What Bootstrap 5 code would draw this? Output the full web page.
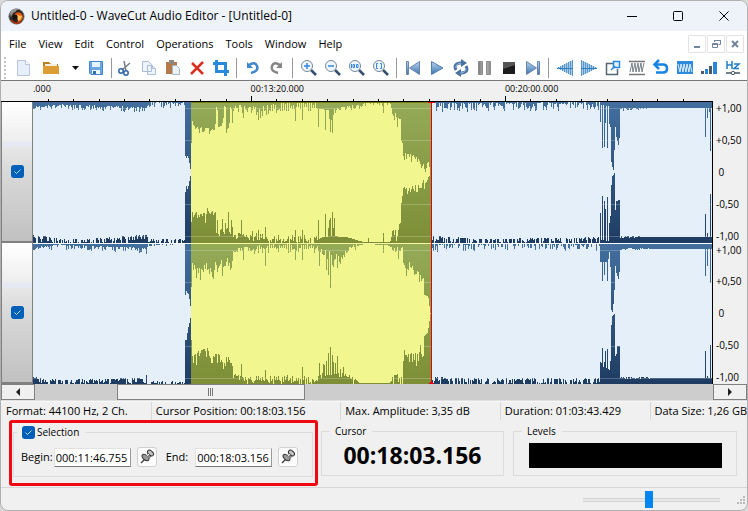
<!DOCTYPE html>
<html lang="en">
<head>
<meta charset="utf-8">
<meta name="viewport" content="width=device-width, initial-scale=1">
<title>Untitled-0 - WaveCut Audio Editor</title>
<link href="https://cdn.jsdelivr.net/npm/bootstrap@5.3.0/dist/css/bootstrap.min.css" rel="stylesheet">
<style>
body{font:11px/16px "Open Sans","Noto Sans",sans-serif;color:#000;background:#d9d9d9}
.app{min-height:100vh;background:#f0f0f0;border:1px solid #b0b0b0;border-radius:8px;overflow:hidden}
.app button{border:0;background:none;padding:0;color:inherit}
.app svg{display:block}
.titlebar{height:30px;background:#eef3fa;padding-left:7px}
.caption{font-size:12px;margin-left:6px}
.winbtn{width:46px;height:30px}
.menubar{height:26px;background:#fff;padding:0 3px 0 8px}
.menubar a{color:#000;text-decoration:none;margin-right:12px;font-size:11px}
.mdi-set{gap:1px}
.app .mdi{width:18px;height:18px;border:1px solid #e3e3e3;border-radius:1px}
.tools{height:24px;background:#fff;border-bottom:1px solid #777;padding:0 0 1px 3px}
.grip{width:7px;height:22px;background:repeating-linear-gradient(#c4c4c4 0 2px,#fff 2px 4px) no-repeat 0 0/2px 100%}
.tool{width:24px;height:22px;flex:none}
.tool svg,.drop svg{margin:auto}
.drop{width:21px;height:22px}
.split{width:8px;height:20px;flex:none;background:linear-gradient(#999,#999) no-repeat 3px 0/1px 100%}
.split-slim{width:5px}
.ruler{height:20px;padding:0 34px 0 32px;font-size:9px;line-height:16px}
.ruler .tick-row{height:5px;margin-top:-1px}
.label-a{width:32%}
.label-b{width:37.4%}
.channel-strip{width:32px;border-right:1px solid #808080;border-left:1px solid #808080}
.channel-box{background:linear-gradient(#fff 0%,#eee 28%,#e7e9f2 29%,#e7e9f2 32%,#e5e6e5 33%,#d9d9d9 50%,#c1c1c1 100%);border-bottom:2px solid #808080}
.tickbox{appearance:none;width:13px;height:13px;margin:0;border-radius:3px;background:#005fb8 url("data:image/svg+xml,%3Csvg xmlns='http://www.w3.org/2000/svg' viewBox='0 0 13 13'%3E%3Cpath d='M3.5 6.5l2 2 4-4' fill='none' stroke='%23bfe0ff'/%3E%3C/svg%3E")}
.wave{flex:1 1 0;min-width:0}
.stage{border-top:1px solid #000}
.stage-body{border-right:1px solid #000;flex:1 1 0;min-width:0}
.scale{width:34px;padding:0 0 0 3px;font-size:10px;line-height:12px}
.scale-half{padding:1px 0}
.hscroll{height:17px;background:#cdcdcd;border-bottom:1px solid #e0e0e0}
.app .hs-btn{width:34px;border:1px solid #808080;background:#f0f0f0}
.hs-lead{width:12.1%}
.hs-thumb{width:27.7%;border:1px solid #808080;background:#f0f0f0}
.info{height:19px;font-size:11px;line-height:18px;border-top:1px solid #f7f7f7;white-space:nowrap}
.info span{padding-left:4px;border-left:1px solid #d7d7d7;overflow:hidden}
.info .i1{width:20.1%;border-left:0;padding-left:5px}
.info .i2{width:25.4%}.info .i3{width:21.4%}.info .i4{width:20.1%}
.panels{padding:0 10px 0 8px;height:67px}
.callout{border:3px solid #f00912;border-radius:3px;width:309px;padding:1px 2px 0 1px;margin-bottom:1px}
.app fieldset{border:1px solid #dcdcdc}
.app legend{float:none;width:auto;font-size:10px;line-height:16px;margin:0 0 0 8px;padding:0 6px 0 5px}
.callout fieldset{height:53px}
.callout legend{margin-left:3px}
.callout legend label{margin-left:2px}
.fields{padding:7px 0 0 7px}
.cursor-box{width:183px;margin:3px 0 11px 3px}
.level-box{margin:3px 0 11px 9px;flex:1}
.clock{font:700 23px/25px "Open Sans","Noto Sans",sans-serif;margin-top:4px}
.meter{height:25px;background:#000;margin:4px 14px 0 15px}
.timefield{width:77px;height:19px;margin-left:1px;border:1px solid #e2e2e2;border-bottom-color:#777;border-right-color:#999;background:#fff;padding:0 1px;font:11px/16px "Open Sans","Noto Sans",sans-serif;color:#000;border-radius:0}
.end-label{margin:0 6px 0 9px}
.app .pin{width:20px;height:20px;margin-left:6px;border:1px solid #d0d0d0;border-radius:3px;background:#fdfdfd}
.foot{border-top:1px solid #d7d7d7;padding-right:1px;min-height:23px}
.zoomer{appearance:none;width:137px;height:18px;background:transparent;margin:0 16px 0 0}
.zoomer::-webkit-slider-runnable-track{height:17px;background:linear-gradient(#d4d4d4 1px,#e7e7e7 1px 3px,#d4d4d4 3px) no-repeat 0 7px/100% 4px}
.zoomer::-webkit-slider-thumb{appearance:none;width:8px;height:17px;background:#0085f1;border:0;border-radius:0}
</style>
<script src="https://cdn.jsdelivr.net/npm/bootstrap@5.3.0/dist/js/bootstrap.bundle.min.js"></script>
</head>
<body>
<div class="app d-flex flex-column">
<header class="titlebar d-flex align-items-center">
  <svg width="17" height="17" viewBox="0 0 17 17" aria-hidden="true"><circle cx="8.5" cy="8.5" r="7.6" fill="#292522" stroke="#767676"/><path d="M2 5Q4 0 10 1L7 4Q4 5 3 10Z" fill="#969696"/><path d="M6 7Q8 3 13 5Q17 9 13 13L9 15Q12 10 6 7Z" fill="#e35c12"/><path d="M9 7l5 1-1 3-3 2z" fill="#ffc15a"/><path d="M3 12q4 5 10 2" fill="none" stroke="#ae3213" stroke-width="1.5"/><circle cx="7" cy="9" r="2.5" fill="#15100f"/></svg>
  <span class="caption me-auto">Untitled-0 - WaveCut Audio Editor - [Untitled-0]</span>
  <button class="winbtn" aria-label="Minimize"><svg class="m-auto" width="12" height="12"><path d="M1 6.5h10" stroke="#000"/></svg></button>
  <button class="winbtn" aria-label="Maximize"><svg class="m-auto" width="12" height="12"><rect x="1.5" y="1.5" width="9" height="9" rx="1" fill="none" stroke="#000"/></svg></button>
  <button class="winbtn" aria-label="Close"><svg class="m-auto" width="12" height="12"><path d="M1.5 1.5l9 9m0-9l-9 9" stroke="#000"/></svg></button>
</header>
<nav class="menubar d-flex align-items-center">
  <a href="#">File</a><a href="#">View</a><a href="#">Edit</a><a href="#">Control</a><a href="#">Operations</a><a href="#">Tools</a><a href="#">Window</a><a href="#">Help</a>
  <div class="mdi-set d-flex ms-auto">
  <button class="mdi" aria-label="Minimize document"><svg width="16" height="16"><path d="M5 11h6" stroke="#71859f" stroke-width="2"/></svg></button>
  <button class="mdi" aria-label="Restore document"><svg width="16" height="16" fill="none" stroke="#71859f"><path d="M6.500 6V4.500h6v4h-2M6 4.500h7M4.500 7.500h5v4h-5zM4 8.500h6"/></svg></button>
  <button class="mdi" aria-label="Close document"><svg width="16" height="16"><path d="M5 5l6 6m0-6l-6 6" stroke="#71859f" stroke-width="2"/></svg></button>
  </div>
</nav>
<div class="tools d-flex align-items-center" role="toolbar" aria-label="Editing tools">
  <span class="grip"></span>
  <button class="tool" aria-label="New"><svg width="18" height="18"><path d="M3.500 1.500h8l4 4v11h-12z" fill="#e6effa" stroke="#b4c5dd"/><path d="M11.500 1.500v4h4" fill="#fff" stroke="#b4c5dd"/></svg></button>
  <button class="tool ms-1" aria-label="Open"><svg width="18" height="18"><path d="M1 3h6l2 2h7v9H1z" fill="#b97f22"/><path d="M3 5h12v4H3z" fill="#f4efe3"/><path d="M1 7h16v8H1z" fill="#dc9d35"/></svg></button>
  <button class="drop" aria-label="Open recent"><svg class="ms-auto me-1" width="8" height="5"><path d="M0 0h7L3.500 4z" fill="#111"/></svg></button>
  <button class="tool" aria-label="Save"><svg width="18" height="18"><path d="M2.500 2.500h13v13H4l-1.500-1.500z" fill="#67a5e4" stroke="#4685c9"/><path d="M5 3h8v5H5z" fill="#e4f1ff"/><path d="M5 11h8v4H5z" fill="#eff6fc"/><path d="M6 12h3v3H6z" fill="#326fae"/></svg></button>
  <span class="split split-slim"></span>
  <button class="tool" aria-label="Cut"><svg width="18" height="18" fill="none"><path d="M8 2l2 10M14 4L6 11" stroke="#777f8b" stroke-width="1.500"/><circle cx="5" cy="12" r="2.200" stroke="#2e66a8" stroke-width="1.500"/><circle cx="10" cy="14" r="2.200" stroke="#2e66a8" stroke-width="1.500"/></svg></button>
  <button class="tool" aria-label="Copy"><svg width="18" height="18" fill="#edf4fd" stroke="#a9bdd8"><path d="M2.500 2.500h6l3 3v7h-9zM7.500 6.500h5l3 3v6h-8z"/><path d="M12.500 6.500v3h3"/></svg></button>
  <button class="tool" aria-label="Paste"><svg width="18" height="18"><path d="M2 3h11v12H2z" fill="#b7794c"/><path d="M5 1h5v4H5z" fill="#8f8880"/><path d="M8.500 6.500h4l3 3v6h-7z" fill="#eef4fb" stroke="#a4b7cf"/></svg></button>
  <button class="tool" aria-label="Delete"><svg width="18" height="18"><path d="M4 4l11 11M15 3L3 15" stroke="#d92f20" stroke-width="2.500"/></svg></button>
  <button class="tool" aria-label="Crop"><svg width="18" height="18" fill="none" stroke="#2989dc" stroke-width="3"><path d="M4.500 1v11.500H17M1 4.500h12.500V17"/></svg></button>
  <span class="split"></span>
  <button class="tool" aria-label="Undo"><svg width="18" height="18"><path d="M5 6Q11 2 13 7T7 14" fill="none" stroke="#3f86cc" stroke-width="2.500"/><path d="M3 3v6h6z" fill="#3f86cc"/></svg></button>
  <button class="tool" aria-label="Redo"><svg width="18" height="18"><path d="M12 6Q6 2 4 7T10 14" fill="none" stroke="#858585" stroke-width="2.500"/><path d="M14 3v6H8z" fill="#858585"/></svg></button>
  <span class="split"></span>
  <button class="tool" aria-label="Zoom in"><svg width="18" height="18"><use href="#lens"/><path d="M4 7h6M7 4v6" stroke="#3387df" stroke-width="1.500"/></svg></button>
  <button class="tool" aria-label="Zoom out"><svg width="18" height="18"><use href="#lens"/><path d="M4 7h6" stroke="#3387df" stroke-width="1.500"/></svg></button>
  <button class="tool" aria-label="Zoom to 100 percent"><svg width="18" height="18"><use href="#lens"/><path d="M3.500 5v4M5 5.500h1.500v3H5zM8.500 5.500H10v3H8.500z" fill="none" stroke="#3387df"/></svg></button>
  <button class="tool" aria-label="Zoom to selection"><svg width="18" height="18"><use href="#lens"/><path d="M6 4.500H4.500v5H6M8 4.500h1.500v5H8" fill="none" stroke="#3387df"/></svg></button>
  <span class="split"></span>
  <button class="tool" aria-label="Go to start"><svg width="18" height="18" fill="url(#steel)" stroke="#6685ad"><path d="M2.500 2.500h2v13h-2zM15.500 2.500v13l-10-6.500z"/></svg></button>
  <button class="tool" aria-label="Play"><svg width="18" height="18"><path d="M3.500 2.500v13L15 9z" fill="url(#steel)" stroke="#4f7dae"/></svg></button>
  <button class="tool" aria-label="Loop"><svg width="18" height="18"><path d="M4 11Q1 5 8 4h3M14 7q3 6-4 7H7" fill="none" stroke="#47729f" stroke-width="3"/><path d="M9 0l6 4-6 4zM9 10l-6 4 6 4z" fill="#47729f"/><path d="M4 9Q3 5 9 4M14 9q0 5-6 5" fill="none" stroke="#9bc0e2"/></svg></button>
  <button class="tool" aria-label="Pause"><svg width="18" height="18" fill="url(#ash)" stroke="#8b8b8b"><path d="M2.500 2.500h4v13h-4zM10.500 2.500h4v13h-4z"/></svg></button>
  <button class="tool" aria-label="Stop"><svg width="18" height="18"><path d="M3 3h12v12H3z" fill="#1c1c1c"/><path d="M3 3h12v3L3 10z" fill="#555"/></svg></button>
  <button class="tool" aria-label="Go to end"><svg width="18" height="18" fill="url(#steel)" stroke="#6685ad"><path d="M13.500 2.500h2v13h-2zM2.500 2.500v13l10-6.500z"/></svg></button>
  <span class="split"></span>
  <button class="tool" aria-label="Fade in"><svg width="18" height="18"><path d="M1 9L17 1v16z" fill="#a9cbea"/><path d="M2.500 8v2M4.500 7v4M6.500 6v6M8.500 5v8M10.500 4v10M12.500 3v12M14.500 2v14M16.500 1v16" stroke="#5b96c9"/><path d="M1 9.500h16" stroke="#2f7fc0"/></svg></button>
  <button class="tool" aria-label="Fade out"><svg width="18" height="18"><path d="M17 9L1 1v16z" fill="#a9cbea"/><path d="M15.500 8v2M13.500 7v4M11.500 6v6M9.500 5v8M7.500 4v10M5.500 3v12M3.500 2v14M1.500 1v16" stroke="#5b96c9"/><path d="M1 9.500h16" stroke="#2f7fc0"/></svg></button>
  <button class="tool" aria-label="Resize"><svg width="18" height="18" fill="none"><path d="M9 4.500H2.500v11h11V10" stroke="#596572" stroke-width="1.500"/><path d="M9.500 2.500h6v6h-6z" fill="#e4f0fd" stroke="#2488e4" stroke-width="1.500"/><path d="M7 11l4-4" stroke="#2488e4" stroke-width="1.500"/></svg></button>
  <button class="tool" aria-label="Normalize"><svg width="18" height="18" fill="none"><path d="M1 2.500h16M1 15.500h16" stroke="#777" stroke-width="1.500"/><path d="M2 13l2-9 1 9 2-9 1 9 2-9 1 9 2-9 1 9 2-9" stroke="#77818b"/></svg></button>
  <button class="tool" aria-label="Reverse"><svg width="18" height="18" fill="none" stroke="#1584e2"><path d="M3 5.500h8q4 0 4 4t-4 4H4" stroke-width="2.500"/><path d="M7 1L2.500 5.500 7 10" stroke-width="2.500"/></svg></button>
  <button class="tool" aria-label="Amplify"><svg width="18" height="18"><path d="M1 2h16v13H1z" fill="#2e8adb"/><path d="M2 5l2 8 1-8 2 8 1-8 2 8 1-8 2 8 1-8 2 8" fill="none" stroke="#e2f1ff"/></svg></button>
  <button class="tool" aria-label="Volume"><svg width="18" height="18"><path d="M1 12h3v3H1zM9 7h3v8H9z" fill="#4d5966"/><path d="M5 10h3v5H5zM13 3h4v12h-4z" fill="#2885d7"/></svg></button>
  <button class="tool" aria-label="Sample rate"><svg width="18" height="18" fill="none"><path d="M3 2v8M8 2v8M3 6h5M10 5h5l-5 4.500h5" stroke="#217dc9" stroke-width="1.500"/><path d="M2 14h14" stroke="#465767" stroke-width="1.500"/><circle cx="9" cy="14" r="1.700" fill="#fff" stroke="#465767"/></svg></button>
</div>
<svg width="0" height="0" class="position-absolute" aria-hidden="true"><defs>
  <linearGradient id="steel" x1="0" y1="0" x2="0" y2="1"><stop stop-color="#b9d3eb"/><stop offset="1" stop-color="#3b75b0"/></linearGradient>
  <linearGradient id="ash"><stop stop-color="#777"/><stop offset=".5" stop-color="#c6c6c6"/><stop offset="1" stop-color="#888"/></linearGradient>
  <g id="lens"><path d="M11 11l5 5" stroke="#35506f" stroke-width="2.500"/><circle cx="7" cy="7" r="5.500" fill="#eef6ff" stroke="#798896"/></g>
  <g id="plug"><path d="M3 15l4-4" stroke="#444" stroke-width="1.500"/><ellipse cx="7.500" cy="9.500" rx="4" ry="2.300" transform="rotate(40 7.500 9.500)" fill="#9a9a9a" stroke="#333"/><path d="M8 8l4-4 3 3-4 4z" fill="#888"/><ellipse cx="12.500" cy="5" rx="3.500" ry="2.200" transform="rotate(40 12.500 5)" fill="#c2c2c2" stroke="#333"/><path d="M9 8l2-2" stroke="#eee"/></g>
</defs></svg>
<div class="ruler">
  <div class="d-flex"><span class="label-a">.000</span><span class="label-b">00:13:20.000</span><span>00:20:00.000</span></div>
  <svg class="tick-row w-100" id="ticks" viewBox="0 0 680 5" preserveAspectRatio="none" shape-rendering="crispEdges"></svg>
</div>
<main class="d-flex flex-grow-1">
  <div class="stage-body stage d-flex">
    <div class="channel-strip d-flex flex-column">
      <div class="channel-box d-flex flex-fill align-items-center justify-content-center"><input class="tickbox" type="checkbox" checked aria-label="Left channel"></div>
      <div class="channel-box d-flex flex-fill align-items-center justify-content-center"><input class="tickbox" type="checkbox" checked aria-label="Right channel"></div>
    </div>
    <svg class="wave" id="wave" viewBox="0 0 679 282" preserveAspectRatio="none" shape-rendering="crispEdges" role="img" aria-label="Stereo waveform"></svg>
  </div>
  <div class="scale d-flex flex-column">
    <div class="scale-half d-flex flex-column justify-content-between flex-fill"><span>+1,00</span><span>+0,50</span><span>&nbsp;0</span><span>-0,50</span><span>-1,00</span></div>
    <div class="scale-half d-flex flex-column justify-content-between flex-fill"><span>+1,00</span><span>+0,50</span><span>&nbsp;0</span><span>-0,50</span><span>-1,00</span></div>
  </div>
</main>
<div class="hscroll d-flex">
  <button class="hs-btn" aria-label="Scroll left"><svg class="m-auto" width="8" height="8"><path d="M6 0v8L2 4z" fill="#222"/></svg></button>
  <div class="flex-fill d-flex"><span class="hs-lead"></span><div class="hs-thumb d-flex align-items-center justify-content-center"><svg width="6" height="8"><path d="M.5 0v8M2.500 0v8M4.500 0v8" stroke="#777"/></svg></div></div>
  <button class="hs-btn" aria-label="Scroll right"><svg class="m-auto" width="8" height="8"><path d="M2 0v8l4-4z" fill="#222"/></svg></button>
</div>
<div class="info d-flex"><span class="i1">Format: 44100 Hz, 2 Ch.</span><span class="i2">Cursor Position: 00:18:03.156</span><span class="i3">Max. Amplitude: 3,35 dB</span><span class="i4">Duration: 01:03:43.429</span><span class="flex-fill">Data Size: 1,26 GB</span></div>
<section class="panels d-flex">
  <div class="callout">
    <fieldset>
      <legend class="d-flex align-items-center"><input class="tickbox" type="checkbox" id="sel" checked><label for="sel">Selection</label></legend>
      <div class="fields d-flex align-items-center">
        <label for="begin">Begin:</label><input class="timefield" id="begin" value="000:11:46.755"><button class="pin" aria-label="Set begin to cursor"><svg width="18" height="18"><use href="#plug"/></svg></button>
        <label class="end-label" for="end">End:</label><input class="timefield" id="end" value="000:18:03.156"><button class="pin" aria-label="Set end to cursor"><svg width="18" height="18"><use href="#plug"/></svg></button>
      </div>
    </fieldset>
  </div>
  <fieldset class="cursor-box"><legend>Cursor</legend><div class="clock text-center">00:18:03.156</div></fieldset>
  <fieldset class="level-box"><legend>Levels</legend><div class="meter"></div></fieldset>
</section>
<footer class="foot d-flex align-items-center justify-content-end flex-shrink-0">
  <input class="zoomer" type="range" min="0" max="100" value="48" aria-label="Zoom">
  <svg class="align-self-end mb-1" width="10" height="10" fill="#bababa"><path d="M7 0h2v2H7zM7 3h2v2H7zM4 3h2v2H4zM7 6h2v2H7zM4 6h2v2H4zM1 6h2v2H1z"/></svg>
</footer>
</div>
<script>
// Ruler: ten minor ticks in every major division.
let d='';
for(let i=-8;i<18;i++){const x=Math.round(218+i*25.4);d+=`M${x} ${i%10===0?0:3}h1V5h-1z`;}
document.getElementById('ticks').innerHTML=`<path d="${d}"/>`;

// Envelope strips. Points are "x,y" at three units per column; a strip has
// an envelope, single-column peaks and a jitter per range.
const parse=s=>s.trim().split(/\s+/).map(p=>p.split(',').map(Number));
let seed=11;
const rnd=()=>(seed=(seed*16807)%2147483647)/2147483647;
function edge(from,to,xo,yo,env,peaks,jit,comb){
  const e=parse(env),p=peaks?parse(peaks):[],out=[];
  for(let c=from;c<to;c++){
    const u=(c-xo)*3+1;let i=0;
    while(i<e.length-2&&e[i+1][0]<=u)i++;
    const [x0,y0]=e[i],[x1,y1]=e[i+1];
    const t=Math.min(1,Math.max(0,(u-x0)/(x1-x0)));
    let y=y0+(y1-y0)*t;
    const j=jit.find(q=>u>=q[0]&&u<q[1]);
    if(j){const r=rnd();y+=(r*r*2-.5)*j[2];}
    if(comb&&u>comb[0]&&u<comb[1]&&c%2)y+=comb[2];
    const k=p.find(q=>Math.abs(q[0]-u)<1.6);
    if(k)y=k[1];
    out.push(Math.round(y/3+yo));
  }
  return out;
}
const ch1={top:[
 ...edge(0,158,-33,-7,'99,44 107,38 180,32 440,40 452,24 554,24','462,36 483,36 489,38 510,38 525,32 535,34',[[107,450,8],[450,554,7]]),
 ...edge(152,399,147,-7,'15,178 18,190 21,183 25,188 30,215 33,235 34,145 36,70 39,90 45,100 104,105 108,70 160,40 175,34 200,40 240,40 300,26 345,22 410,24 412,42 440,44 465,44 520,34 550,30 555,22 630,24 636,45 650,72 662,80 663,134 669,150 670,183 685,180 710,192 720,202 732,212 747,208 750,235 753,235','110,37 116,97 122,92 126,84 135,37 144,100 147,84 156,84 190,68 235,75 345,78 367,75 415,97 436,105 447,73 450,110 453,75 457,114 460,60 610,54 652,97',[[39,105,10],[108,160,45],[160,300,12],[300,410,6],[463,630,8],[636,662,18],[672,748,14]],[225,410,17]),
 ...edge(399,680,387,-7,'36,30 540,28 567,35 568,88 572,100 573,195 578,222 582,225 583,165 586,97 589,125 595,150 598,128 600,42 680,40 877,40','541,80 547,158 553,155 557,83 562,158 857,125 862,68 868,52 871,167',[[36,540,14],[605,680,5]])],
bot:[
 ...edge(0,158,-33,-7,'99,420 107,429 140,427 180,438 290,435 440,425 452,438 554,438','',[[107,554,12]]),
 ...edge(152,399,147,-7,'15,302 18,266 21,287 25,272 30,249 33,235 34,380 36,352 50,356 75,360 82,352 108,355 110,385 142,395 160,418 215,425 260,438 410,436 430,425 465,424 500,426 550,441 630,441 636,420 655,395 662,392 663,330 669,290 672,280 685,285 705,270 720,272 730,260 740,268 750,235 753,235','52,370 76,385 82,340 110,415 120,405 133,418 144,352 150,418 155,375 183,375 235,405 257,396 345,405 367,405 415,375 436,358 444,400 447,375 450,368 457,350 460,400 463,370 565,430 610,415 640,405',[[36,108,12],[110,160,35],[160,410,12],[636,662,25],[669,748,14]],[215,410,-11]),
 ...edge(399,680,387,-7,'36,430 180,440 540,435 567,438 568,385 572,357 573,277 577,243 583,235 585,357 588,318 599,315 600,425 877,425','541,354 547,303 553,318 557,342 562,306 857,357 862,415 871,297',[[36,540,17],[600,665,3]])]};
const ch2={top:[
 ...edge(0,158,-33,138,'99,32 107,25 180,17 440,28 445,14 554,13','439,42',[[107,440,8],[445,520,4]]),
 ...edge(152,399,147,138,'15,170 18,152 25,163 30,187 33,218 34,140 36,60 39,85 60,92 78,85 88,95 105,85 158,75 160,33 180,26 210,22 260,16 410,16 435,36 460,42 480,60 500,32 530,18 550,13 620,14 640,24 668,28 669,75 678,96 690,78 712,98 723,115 731,122 732,165 742,168 747,178 749,218 753,218','78,70 88,103 105,65 125,60 142,55 150,90 190,60 235,40 257,78 345,60 367,60 418,78 439,90 445,105 451,143 457,75 460,82 472,85 481,72 610,40 656,57 678,107 687,65',[[39,160,24],[160,410,8],[430,530,14],[636,668,12],[669,732,16]],[210,430,12]),
 ...edge(399,680,387,138,'36,20 200,13 540,16 541,65 564,65 568,35 571,80 573,207 578,218 583,150 586,78 589,100 595,117 598,97 600,27 877,26','547,122 553,105 562,122 857,107 862,77 871,130',[[36,540,13],[600,690,3]])],
bot:[
 ...edge(0,158,-33,138,'99,410 107,416 180,424 440,418 444,428 554,430','439,405',[[107,554,10]]),
 ...edge(152,399,147,138,'15,297 18,306 21,286 25,260 30,240 33,222 34,300 36,352 45,342 70,338 83,335 105,350 125,355 150,358 158,375 160,405 190,412 215,425 410,424 430,408 475,400 500,410 520,415 540,429 630,429 640,412 668,408 669,337 690,350 720,335 731,345 732,290 742,280 747,255 750,222 753,222','83,325 137,378 183,372 257,390 322,405 367,380 418,368 430,372 433,375 439,362 445,340 451,321 457,345 460,365 466,370 472,347 481,387 490,380 710,378 720,315',[[36,158,22],[160,410,10],[475,530,12],[636,668,16],[669,732,18]],[210,430,-11]),
 ...edge(399,680,387,138,'36,418 180,423 540,422 541,365 550,380 570,390 571,362 574,255 577,228 583,222 585,350 591,340 592,318 599,318 600,413 877,413','547,325 553,365 556,333 562,327 857,333 862,407 871,315',[[36,540,15],[600,690,3]])]};
const S0=158,S1=399;
// Fills the area between both edges; light outside the selection, yellow inside.
function columns(ch,a,b,lo,hi){
  let s='';
  for(let c=a;c<b;c++){const t=Math.max(lo,ch.top[c]),e=Math.min(hi,ch.bot[c]);if(e>t)s+=`M${c} ${t}h1V${e}h-1z`;}
  return s;
}
function band(y,h,ch){
  const g=[6,38,102,134].map(v=>`M0 ${y+v}h680v1H0z`).join('');
  const light=columns(ch,0,S0,y,y+h)+columns(ch,S1,680,y,y+h);
  return `<rect y="${y}" width="680" height="${h}" fill="url(#deep)"/><rect x="${S0}" y="${y}" width="241" height="${h}" fill="url(#moss)"/><path d="${g}" fill="#fff" fill-opacity=".22"/><path d="${light}" fill="#e5effa"/><path d="${columns(ch,S0,S1,y,y+h)}" fill="#f1f68f"/>`;
}
// Adjacent strips overlap by the six quiet columns before the selection.
for(const c of [ch1,ch2])for(const k of ['top','bot']){const quiet=c[k].splice(158,6);c[k].splice(152,6,...quiet);}
document.getElementById('wave').innerHTML=`<defs><linearGradient id="deep" x2="0" y2="1"><stop stop-color="#426f9f"/><stop offset="1" stop-color="#1e3c62"/></linearGradient><linearGradient id="moss" x2="0" y2="1"><stop stop-color="#94aa57"/><stop offset="1" stop-color="#7d8e36"/></linearGradient></defs>`
+band(0,141,ch1)+band(142,140,ch2)
+`<path d="M0 141h680v1H0z" fill="#fff"/><path d="M158 141h241v1H158z" fill="#f8f7a0"/><path d="M158 0h241v1H158z" fill="#777b10"/><path d="M398 0h1v282h-1zM395 0h7v1h-7zM396 281h5v1h-5zM397 280h3v1h-3z" fill="#e60012"/>`;
</script>
</body>
</html>
